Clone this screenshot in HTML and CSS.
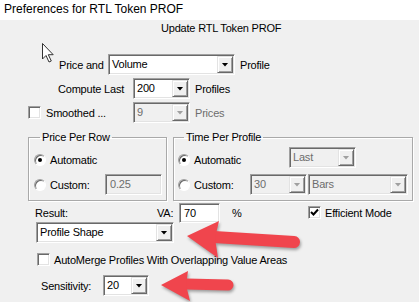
FILE: index.html
```html
<!DOCTYPE html>
<html lang="en">
<head>
    <meta charset="UTF-8">
    <title>Preferences for RTL Token PROF</title>
    <link rel="stylesheet" href="styles.css">
</head>
<body>
    <div class="titlebar">Preferences for RTL Token PROF</div>

    <div class="dialog">
        <div class="heading">Update RTL Token PROF</div>

        <div class="row row-price">
            <span class="lead">Price and</span>
            <div class="combo w-volume"><span class="value">Volume</span><span class="drop"></span></div>
            <span class="after">Profile</span>
        </div>

        <div class="row row-compute">
            <span class="lead">Compute Last</span>
            <div class="combo w-small"><span class="value">200</span><span class="drop"></span></div>
            <span class="after">Profiles</span>
        </div>

        <div class="row row-smooth">
            <span class="check"></span>
            <span class="lead">Smoothed ...</span>
            <div class="combo w-small disabled"><span class="value">9</span><span class="drop"></span></div>
            <span class="after muted">Prices</span>
        </div>

        <div class="groups">
            <fieldset class="group group-row">
                <legend>Price Per Row</legend>
                <div class="grow grow-a">
                    <span class="radio on"></span>
                    <span class="opt">Automatic</span>
                </div>
                <div class="grow grow-b">
                    <span class="radio"></span>
                    <span class="opt opt-custom">Custom:</span>
                    <div class="field disabled w-small">0.25</div>
                </div>
            </fieldset>

            <fieldset class="group group-time">
                <legend>Time Per Profile</legend>
                <div class="grow grow-a">
                    <span class="radio on"></span>
                    <span class="opt opt-auto">Automatic</span>
                    <div class="combo w-last disabled"><span class="value">Last</span><span class="drop"></span></div>
                </div>
                <div class="grow grow-b">
                    <span class="radio"></span>
                    <span class="opt opt-custom">Custom:</span>
                    <div class="combo w-small disabled"><span class="value">30</span><span class="drop"></span></div>
                    <div class="combo w-bars disabled"><span class="value">Bars</span><span class="drop"></span></div>
                </div>
            </fieldset>
        </div>

        <div class="row row-result">
            <span class="lead">Result:</span>
            <span class="va">VA:</span>
            <div class="field w-va">70</div>
            <span class="pct">%</span>
            <span class="check checked">
                <svg width="11" height="11" viewBox="0 0 11 11"><polyline points="2,5 4.5,7.5 9,2.5" fill="none" stroke="#000" stroke-width="2"/></svg>
            </span>
            <span class="after-check">Efficient Mode</span>
        </div>

        <div class="row row-shape">
            <div class="combo w-shape"><span class="value">Profile Shape</span><span class="drop"></span></div>
        </div>

        <div class="row row-merge">
            <span class="check"></span>
            <span class="after-check">AutoMerge Profiles With Overlapping Value Areas</span>
        </div>

        <div class="row row-sens">
            <span class="lead">Sensitivity:</span>
            <div class="combo w-sens"><span class="value">20</span><span class="drop"></span></div>
        </div>
    </div>

    <!-- annotation layer: mouse pointer and the two red arrows -->
    <svg class="overlay" width="419" height="302" viewBox="0 0 419 302">
        <path class="pointer" d="M42.5,43.5 V59 L46,55.5 L49,62 L51.3,61 L48.3,54.7 H53.2 Z"/>
        <g class="arrow">
            <line x1="214" y1="237" x2="294" y2="242" stroke-width="12" stroke-linecap="round"/>
            <polygon points="187,236 219,221 215,238 218,258"/>
        </g>
        <g class="arrow">
            <line x1="186" y1="284" x2="228" y2="285" stroke-width="11" stroke-linecap="round"/>
            <polygon points="161,285 188,271 186,285 190,301"/>
        </g>
    </svg>
</body>
</html>
```

FILE: styles.css
```css
* {
    margin: 0;
    padding: 0;
    box-sizing: border-box;
}

html,
body {
    width: 419px;
    height: 302px;
    overflow: hidden;
}

body {
    position: relative;
    font-family: "Liberation Sans", Arial, sans-serif;
    font-size: 11px;
    letter-spacing: -0.2px;
    color: #000;
    background-color: #f0f0f0;
}

.titlebar {
    height: 20px;
    background-color: #fff;
    font-size: 12px;
    letter-spacing: 0;
    line-height: 19px;
    padding-left: 4px;
}

.dialog {
    height: 282px;
}

.heading {
    margin-top: 2px;
    padding-left: 161px;
    line-height: 13px;
}

.row {
    display: flex;
    align-items: center;
    height: 21px;
}

.muted {
    color: #6d6d6d;
}

.after {
    margin-left: 5px;
}

/* top rows */
.row-price {
    margin-top: 19px;
    padding-left: 59px;
}

.row-price .lead {
    width: 49px;
}

.row-compute {
    margin-top: 3px;
    padding-left: 58px;
}

.row-compute .lead {
    width: 75px;
}

.row-smooth {
    margin-top: 3px;
    padding-left: 28px;
}

.row-smooth .lead {
    margin-left: 5px;
    width: 87px;
}

/* sunken controls */
.combo,
.field {
    display: flex;
    height: 21px;
    padding: 1px;
    background-color: #fff;
    border: 1px solid;
    border-color: #a0a0a0 #fff #fff #a0a0a0;
    box-shadow: inset 1px 1px 0 #696969, inset -1px -1px 0 #e3e3e3;
}

.combo .value {
    flex: 1;
    padding-left: 2px;
    line-height: 17px;
}

.combo .drop {
    width: 16px;
    display: flex;
    align-items: center;
    justify-content: center;
    background-color: #f0f0f0;
    border: 1px solid;
    border-color: #e3e3e3 #696969 #696969 #e3e3e3;
    box-shadow: inset 1px 1px 0 #fff, inset -1px -1px 0 #a0a0a0;
}

.combo .drop::after {
    content: "";
    width: 7px;
    height: 4px;
    background-color: #000;
    clip-path: polygon(0 0, 100% 0, 50% 100%);
}

.field {
    padding-left: 4px;
    line-height: 17px;
}

.disabled {
    background-color: #f0f0f0;
    color: #6d6d6d;
}

.disabled .drop::after {
    background-color: #a0a0a0;
}

.w-volume { width: 127px; }
.w-small { width: 57px; }
.w-last { width: 67px; }
.w-bars { width: 100px; margin-left: 1px; }
.w-va { width: 41px; height: 20px; }
.w-shape { width: 138px; }
.w-sens { width: 46px; }

.check {
    width: 13px;
    height: 13px;
    display: flex;
    align-items: center;
    justify-content: center;
    background-color: #fff;
    border: 1px solid;
    border-color: #a0a0a0 #fff #fff #a0a0a0;
    box-shadow: inset 1px 1px 0 #696969, inset -1px -1px 0 #e3e3e3;
}

.after-check {
    margin-left: 4px;
}

/* group boxes */
.groups {
    display: flex;
    gap: 6px;
    margin-top: 8px;
    padding-left: 28px;
}

.group {
    height: 70px;
    border: 1px solid #a9a9a9;
    box-shadow: inset 1px 1px 0 #fff, 1px 1px 0 #fff;
}

.group legend {
    margin-left: 6px;
    padding: 0 2px;
    line-height: 13px;
}

.group-row {
    width: 139px;
    padding-left: 5px;
}

.group-time {
    width: 240px;
    padding-left: 4px;
}

.grow {
    display: flex;
    align-items: center;
}

.grow-a {
    margin-top: 3px;
    height: 26px;
}

.grow-a .combo {
    align-self: flex-start;
}

.grow-b {
    margin-top: 1px;
    height: 21px;
}

.radio {
    width: 12px;
    height: 12px;
    display: flex;
    align-items: center;
    justify-content: center;
    border-radius: 50%;
    background-color: #fff;
    border: 1px solid;
    border-color: #a0a0a0 #fff #fff #a0a0a0;
    box-shadow: inset 1px 1px 0 #696969;
}

.radio.on::after {
    content: "";
    width: 4px;
    height: 4px;
    border-radius: 50%;
    background-color: #000;
}

.opt {
    margin-left: 4px;
}

.group-row .opt-custom {
    width: 55px;
}

.group-time .opt-auto {
    width: 95px;
}

.group-time .opt-custom {
    width: 56px;
}

/* result area */
.row-result {
    margin-top: 2px;
    height: 19px;
    padding-left: 35px;
}

.row-result .lead {
    width: 122px;
}

.va {
    width: 22px;
}

.pct {
    margin-left: 12px;
    width: 76px;
}

.row-shape {
    padding-left: 36px;
}

.row-merge {
    margin-top: 10px;
    height: 13px;
    padding-left: 37px;
}

.row-sens {
    margin-top: 9px;
    padding-left: 41px;
}

.row-sens .lead {
    width: 62px;
}

/* annotations */
.overlay {
    position: absolute;
    top: 0;
    left: 0;
    pointer-events: none;
}

.pointer {
    fill: #fff;
    stroke: #333;
    stroke-width: 1;
}

.arrow {
    fill: #f0454d;
    stroke: #f0454d;
    filter: drop-shadow(1px 2px 1.5px rgba(0, 0, 0, 0.35));
}

.arrow polygon {
    stroke: none;
}
```
